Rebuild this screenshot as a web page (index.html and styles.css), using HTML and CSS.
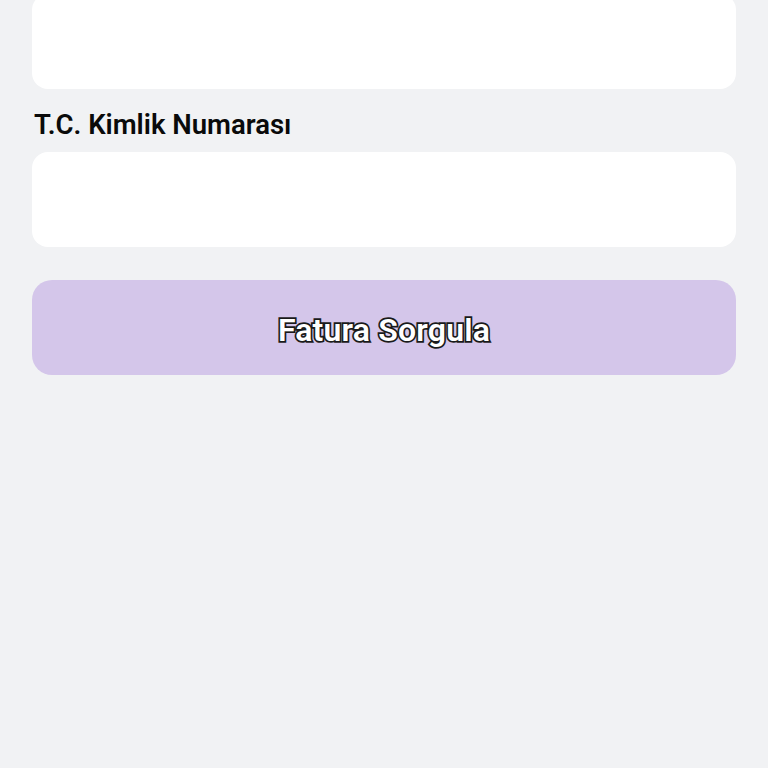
FILE: index.html
```html
<!DOCTYPE html>
<html lang="tr">
<head>
<meta charset="utf-8">
<link rel="stylesheet" href="styles.css">
</head>
<body>
<main class="form">
  <div class="field">
    <div class="input"></div>
  </div>
  <div class="field">
    <label class="label">T.C. Kimlik Numarası</label>
    <div class="input"></div>
  </div>
  <button class="submit">Fatura Sorgula</button>
</main>
</body>
</html>
```
FILE: styles.css
```css
html, body {
  margin: 0;
  padding: 0;
  background: #f1f2f4;
  height: 100%;
}
body {
  font-family: Roboto, "Liberation Sans", sans-serif;
  overflow: hidden;
}
.form {
  display: flex;
  flex-direction: column;
  padding: 0 32px;
  margin-top: -6px;
}
.field {
  display: flex;
  flex-direction: column;
}
.label {
  font-size: 27.5px;
  font-weight: 600;
  color: #0a0a0a;
  margin: 20px 0 11px 2px;
  line-height: 32px;
}
.input {
  height: 95px;
  background: #fff;
  border-radius: 16px;
}
.submit {
  margin-top: 33px;
  height: 95px;
  border: none;
  border-radius: 20px;
  background: #d4c6ea;
  font-family: Roboto, "Liberation Sans", sans-serif;
  font-size: 32px;
  font-weight: 600;
  letter-spacing: 0.2px;
  color: #fff;
  -webkit-text-stroke: 3.5px #1a1a1a;
  paint-order: stroke fill;
  padding: 4px 0 0;
}
```
